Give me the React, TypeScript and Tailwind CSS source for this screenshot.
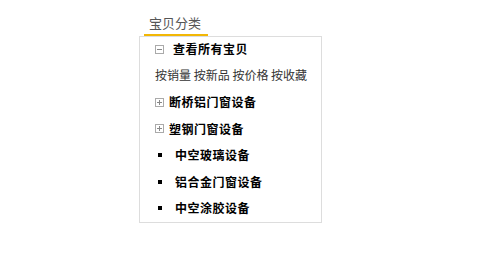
import React from 'react';

const font = { fontFamily: '"Noto Sans CJK SC", "Liberation Sans", sans-serif' };

const MinusBox = () => (
  <span className="w-[9px] h-[9px] border border-[#aaa] flex items-center justify-center shrink-0">
    <span className="w-[5px] h-px bg-[#888]" />
  </span>
);

const PlusBox = () => (
  <span className="relative w-[9px] h-[9px] border border-[#aaa] flex items-center justify-center shrink-0">
    <span className="w-[5px] h-px bg-[#888]" />
    <span className="absolute w-px h-[5px] bg-[#888]" />
  </span>
);

const Bullet = () => <span className="w-[4px] h-[4px] bg-black ml-[3px] shrink-0" />;

const leaves = [
  { name: '中空玻璃设备', h: 'h-[26px]' },
  { name: '铝合金门窗设备', h: 'h-[27px]' },
  { name: '中空涂胶设备', h: 'h-[26px]' },
];

export default function App() {
  return (
    <div className="w-[500px] h-[271px] bg-white pt-[12px] pl-[139px]" style={font}>
      <div className="ml-[5px] w-[64px] h-[24px] border-b-2 border-[#f2b705] pl-[5px] text-[13px] leading-[22px] text-[#555]">
        宝贝分类
      </div>
      <div className="w-[183px] h-[187px] border border-[#ddd] pl-[15px] text-[12px]">
        <div className="h-[24px] flex items-center">
          <MinusBox />
          <span className="ml-[9px] font-bold text-black tracking-[0.5px]">查看所有宝贝</span>
        </div>
        <div className="h-[28px] flex items-center text-[#333]">按销量 按新品 按价格 按收藏</div>
        <div className="h-[26px] flex items-center">
          <PlusBox />
          <span className="ml-[5px] font-bold text-black tracking-[0.5px]">断桥铝门窗设备</span>
        </div>
        <div className="h-[27px] flex items-center">
          <PlusBox />
          <span className="ml-[5px] font-bold text-black tracking-[0.5px]">塑钢门窗设备</span>
        </div>
        {leaves.map((l) => (
          <div key={l.name} className={`${l.h} flex items-center`}>
            <Bullet />
            <span className="ml-[13px] font-bold text-black tracking-[0.5px]">{l.name}</span>
          </div>
        ))}
      </div>
    </div>
  );
}
